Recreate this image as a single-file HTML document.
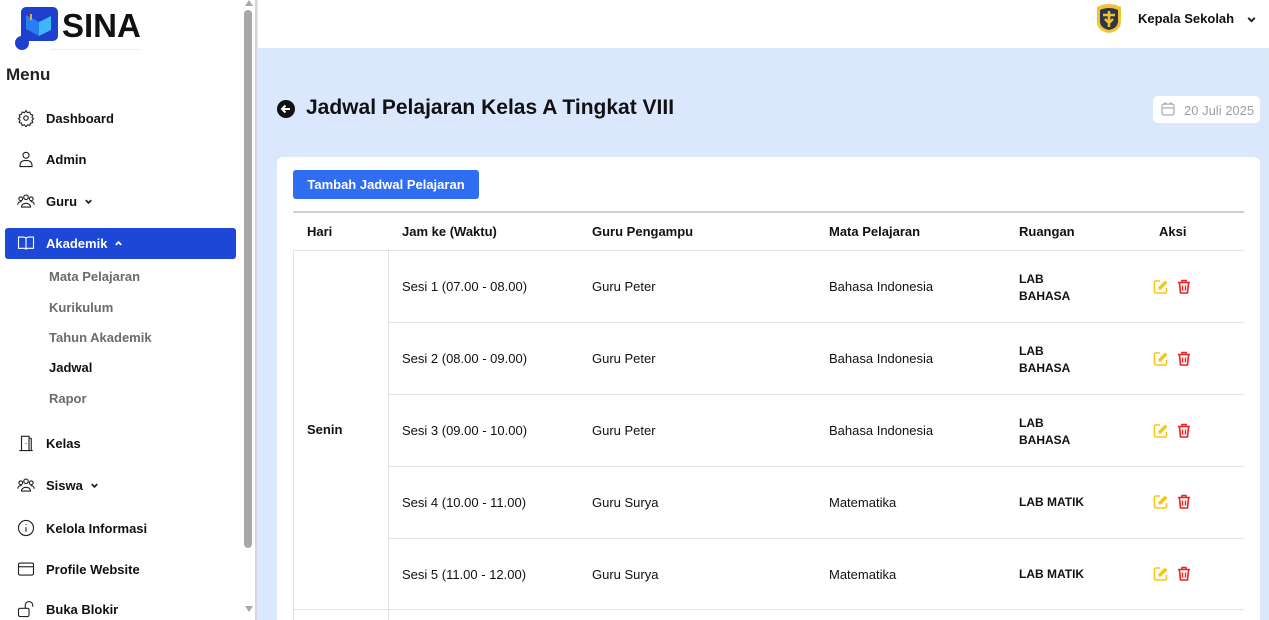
<!DOCTYPE html>
<html><head><meta charset="utf-8"><style>
*{box-sizing:border-box;margin:0;padding:0}
html,body{width:1269px;height:620px;overflow:hidden}
body{font-family:"Liberation Sans",sans-serif;background:#dbe7fd;position:relative;color:#111}
.side{position:absolute;left:0;top:0;width:257px;height:620px;background:#fff;border-right:2px solid #d6d6d6}
.sb{position:absolute;left:244px;top:10px;width:8px;height:538px;background:#a8a8a8;border-radius:4px}
.logo{position:absolute;left:14px;top:7px}
.logotxt{position:absolute;left:62px;top:7px;font-size:33px;font-weight:bold}
.menu{position:absolute;left:6px;top:65px;font-size:17px;font-weight:bold;color:#222}
.it{position:absolute;left:17px;font-size:13px;font-weight:bold;display:flex;align-items:center;gap:11px}
.it svg{width:18px;height:18px;fill:none;stroke:#222;stroke-width:1.5}
.it svg.ch{width:9px;height:9px;stroke-width:2;margin-left:-4px}
.sub{position:absolute;left:49px;font-size:13px;color:#6b6b6b;font-weight:bold}
.act{position:absolute;left:5px;top:228px;width:231px;height:31px;background:#1d47d6;border-radius:3px}
.hdr{position:absolute;left:258px;top:0;right:0;height:48px;background:#fff}
.title{position:absolute;left:306px;top:96px;font-size:21px;font-weight:bold}
.date{position:absolute;left:1153px;top:96px;width:107px;height:27px;background:#fff;border-radius:5px;font-size:13px;color:#9aa0a6;padding:7px 0 0 31px}
.card{position:absolute;left:277px;top:157px;width:983px;height:463px;background:#fff;border-radius:6px 6px 0 0}
.btn{position:absolute;left:293px;top:170px;width:186px;height:29px;background:#2f6df2;color:#fff;font-size:13px;font-weight:bold;border-radius:3px;text-align:center;line-height:29px}
.hl{position:absolute;left:293px;width:951px;height:1px;background:#e2e2e2}
.t{position:absolute;font-size:13px}
.th{font-weight:bold}
</style></head><body>
<div class="side">
<svg class="logo" width="46" height="44" viewBox="0 0 46 44"><rect x="7" y="0" width="37" height="34" rx="5" fill="#1f3fcf"/><circle cx="8" cy="36" r="7" fill="#1f3fcf"/><path d="M12 8 L25 15 L25 29 L12 22Z" fill="#2a7ff0"/><path d="M25 15 L37 9 L37 23 L25 29Z" fill="#3fb6f5"/><rect x="16" y="7" width="2" height="6" fill="#f5a623"/></svg>
<div class="logotxt">SINA</div>
<div style="position:absolute;left:50px;top:49px;width:90px;height:1px;background:#eee"></div>
<div class="menu">Menu</div>
<div class="sb"></div>
<div style="position:absolute;left:245px;top:0;width:0;height:0;border:4px solid transparent;border-bottom:6px solid #a8a8a8;border-top:0"></div>
<div style="position:absolute;left:245px;top:606px;border:4px solid transparent;border-top:6px solid #a8a8a8;border-bottom:0"></div>
<div class="act"></div>
<div class="it" style="top:109px"><svg viewBox="0 0 24 24"><circle cx="12" cy="12" r="3"/><path d="M12 2l2 3 3-1 1 3 3 1-1 3 2 2-2 2 1 3-3 1-1 3-3-1-2 3-2-3-3 1-1-3-3-1 1-3-2-2 2-2-1-3 3-1 1-3 3 1z"/></svg>Dashboard</div>
<div class="it" style="top:150px"><svg viewBox="0 0 24 24"><circle cx="12" cy="7" r="4"/><path d="M4 22v-2a6 6 0 0 1 6-6h4a6 6 0 0 1 6 6v2z"/></svg>Admin</div>
<div class="it" style="top:192px"><svg viewBox="0 0 24 24"><circle cx="12" cy="7" r="3"/><circle cx="5" cy="9" r="2.5"/><circle cx="19" cy="9" r="2.5"/><path d="M6 20a6 5 0 0 1 12 0zM1 17a4 4 0 0 1 5-4M23 17a4 4 0 0 0-5-4"/></svg>Guru <svg class="ch" viewBox="0 0 10 10"><path d="M2 3.5l3 3 3-3"/></svg></div>
<div class="it" style="top:234px;color:#fff"><svg viewBox="0 0 24 24" style="stroke:#fff"><path d="M2 4h7a3 3 0 0 1 3 3v14a2 2 0 0 0-2-2H2zM22 4h-7a3 3 0 0 0-3 3v14a2 2 0 0 1 2-2h8z"/></svg>Akademik <svg class="ch" viewBox="0 0 10 10" style="stroke:#fff"><path d="M2 6.5l3-3 3 3"/></svg></div>
<div class="sub" style="top:269px">Mata Pelajaran</div>
<div class="sub" style="top:300px">Kurikulum</div>
<div class="sub" style="top:330px">Tahun Akademik</div>
<div class="sub" style="top:360px;color:#111">Jadwal</div>
<div class="sub" style="top:391px">Rapor</div>
<div class="it" style="top:434px"><svg viewBox="0 0 24 24"><path d="M3 22h18M6 22V3h10v19M16 5l3 1v16M12 12v1"/></svg>Kelas</div>
<div class="it" style="top:476px"><svg viewBox="0 0 24 24"><circle cx="12" cy="7" r="3"/><circle cx="5" cy="9" r="2.5"/><circle cx="19" cy="9" r="2.5"/><path d="M6 20a6 5 0 0 1 12 0zM1 17a4 4 0 0 1 5-4M23 17a4 4 0 0 0-5-4"/></svg>Siswa <svg class="ch" viewBox="0 0 10 10"><path d="M2 3.5l3 3 3-3"/></svg></div>
<div class="it" style="top:519px"><svg viewBox="0 0 24 24"><circle cx="12" cy="12" r="10"/><path d="M12 11v6M12 7v1"/></svg>Kelola Informasi</div>
<div class="it" style="top:560px"><svg viewBox="0 0 24 24"><rect x="2" y="4" width="20" height="16" rx="2"/><path d="M2 9h20"/></svg>Profile Website</div>
<div class="it" style="top:600px"><svg viewBox="0 0 24 24"><rect x="2" y="11" width="14" height="11" rx="2"/><path d="M11 11V7a5 5 0 0 1 10 0v2"/></svg>Buka Blokir</div>
</div>
<div class="hdr"></div>
<svg style="position:absolute;left:1094px;top:3px" width="30" height="31" viewBox="0 0 30 31"><path d="M3 4 Q15 -2 27 4 L27 18 Q27 28 15 30 Q3 28 3 18Z" fill="#f2c230"/><path d="M6 7 Q15 3 24 7 L24 18 Q24 25 15 27 Q6 25 6 18Z" fill="#2d3748"/><path d="M9 12h12M15 8v16M11 16l4 4 4-4" stroke="#f2c230" stroke-width="2.5" fill="none"/></svg>
<div class="t th" style="left:1138px;top:11px">Kepala Sekolah</div>
<svg style="position:absolute;left:1246px;top:14px" width="11" height="11" viewBox="0 0 10 10" fill="none" stroke="#222" stroke-width="1.8"><path d="M2 3.5l3 3 3-3"/></svg>
<svg style="position:absolute;left:277px;top:100px" width="18" height="18" viewBox="0 0 18 18"><circle cx="9" cy="9" r="9" fill="#111"/><path d="M13 9H5M8.5 5.5L5 9l3.5 3.5" stroke="#fff" stroke-width="2" fill="none"/></svg>
<div class="title">Jadwal Pelajaran Kelas A Tingkat VIII</div>
<div class="date">20 Juli 2025</div>
<svg style="position:absolute;left:1161px;top:102px" width="14" height="14" viewBox="0 0 14 14" fill="none" stroke="#aaa" stroke-width="1.2"><rect x="1" y="2" width="12" height="11" rx="2"/><path d="M1 6h12M4 0v3M10 0v3"/></svg>
<div class="card"></div>
<div class="btn">Tambah Jadwal Pelajaran</div>
<div class="hl" style="top:211px;height:2px;background:#cfcfcf"></div>
<div class="t th" style="left:307px;top:224px">Hari</div>
<div class="t th" style="left:402px;top:224px">Jam ke (Waktu)</div>
<div class="t th" style="left:592px;top:224px">Guru Pengampu</div>
<div class="t th" style="left:829px;top:224px">Mata Pelajaran</div>
<div class="t th" style="left:1019px;top:224px">Ruangan</div>
<div class="t th" style="left:1159px;top:224px">Aksi</div>
<div class="hl" style="top:250px"></div>
<div class="hl" style="left:388px;width:856px;top:322px"></div>
<div class="hl" style="left:388px;width:856px;top:394px"></div>
<div class="hl" style="left:388px;width:856px;top:466px"></div>
<div class="hl" style="left:388px;width:856px;top:538px"></div>
<div class="hl" style="top:609px"></div>
<div style="position:absolute;left:293px;top:250px;width:1px;height:370px;background:#e2e2e2"></div>
<div style="position:absolute;left:388px;top:250px;width:1px;height:370px;background:#e2e2e2"></div>
<div class="t th" style="left:307px;top:422px">Senin</div>
<div class="t" style="left:402px;top:279px">Sesi 1 (07.00 - 08.00)</div>
<div class="t" style="left:402px;top:351px">Sesi 2 (08.00 - 09.00)</div>
<div class="t" style="left:402px;top:423px">Sesi 3 (09.00 - 10.00)</div>
<div class="t" style="left:402px;top:495px">Sesi 4 (10.00 - 11.00)</div>
<div class="t" style="left:402px;top:567px">Sesi 5 (11.00 - 12.00)</div>
<div class="t" style="left:592px;top:279px">Guru Peter</div>
<div class="t" style="left:592px;top:351px">Guru Peter</div>
<div class="t" style="left:592px;top:423px">Guru Peter</div>
<div class="t" style="left:592px;top:495px">Guru Surya</div>
<div class="t" style="left:592px;top:567px">Guru Surya</div>
<div class="t" style="left:829px;top:279px">Bahasa Indonesia</div>
<div class="t" style="left:829px;top:351px">Bahasa Indonesia</div>
<div class="t" style="left:829px;top:423px">Bahasa Indonesia</div>
<div class="t" style="left:829px;top:495px">Matematika</div>
<div class="t" style="left:829px;top:567px">Matematika</div>
<div class="t th" style="left:1019px;top:271px;font-size:12px;line-height:17px">LAB<br>BAHASA</div>
<div class="t th" style="left:1019px;top:343px;font-size:12px;line-height:17px">LAB<br>BAHASA</div>
<div class="t th" style="left:1019px;top:415px;font-size:12px;line-height:17px">LAB<br>BAHASA</div>
<div class="t th" style="left:1019px;top:495px;font-size:12px">LAB MATIK</div>
<div class="t th" style="left:1019px;top:567px;font-size:12px">LAB MATIK</div>
<svg width="0" height="0" style="position:absolute"><defs>
<g id="ed"><path d="M7 2H3a1.5 1.5 0 0 0-1.5 1.5v9A1.5 1.5 0 0 0 3 14h9a1.5 1.5 0 0 0 1.5-1.5V9" stroke="#f5c518" stroke-width="1.6" fill="none"/><path d="M12 1.5l2.5 2.5L8 10.5H5.5V8z" fill="#f5c518"/></g>
<g id="tr"><path d="M1 3.5h12M5 3V1.5h4V3M2.5 4l1 10h7l1-10" stroke="#ee2222" stroke-width="1.6" fill="none"/><path d="M5.5 6.5v5M8.5 6.5v5" stroke="#ee2222" stroke-width="1.4"/></g></defs></svg>
<svg style="position:absolute;left:1153px;top:279px" width="16" height="16"><use href="#ed"/></svg>
<svg style="position:absolute;left:1177px;top:279px" width="14" height="16"><use href="#tr"/></svg>
<svg style="position:absolute;left:1153px;top:351px" width="16" height="16"><use href="#ed"/></svg>
<svg style="position:absolute;left:1177px;top:351px" width="14" height="16"><use href="#tr"/></svg>
<svg style="position:absolute;left:1153px;top:423px" width="16" height="16"><use href="#ed"/></svg>
<svg style="position:absolute;left:1177px;top:423px" width="14" height="16"><use href="#tr"/></svg>
<svg style="position:absolute;left:1153px;top:494px" width="16" height="16"><use href="#ed"/></svg>
<svg style="position:absolute;left:1177px;top:494px" width="14" height="16"><use href="#tr"/></svg>
<svg style="position:absolute;left:1153px;top:566px" width="16" height="16"><use href="#ed"/></svg>
<svg style="position:absolute;left:1177px;top:566px" width="14" height="16"><use href="#tr"/></svg>
</body></html>
